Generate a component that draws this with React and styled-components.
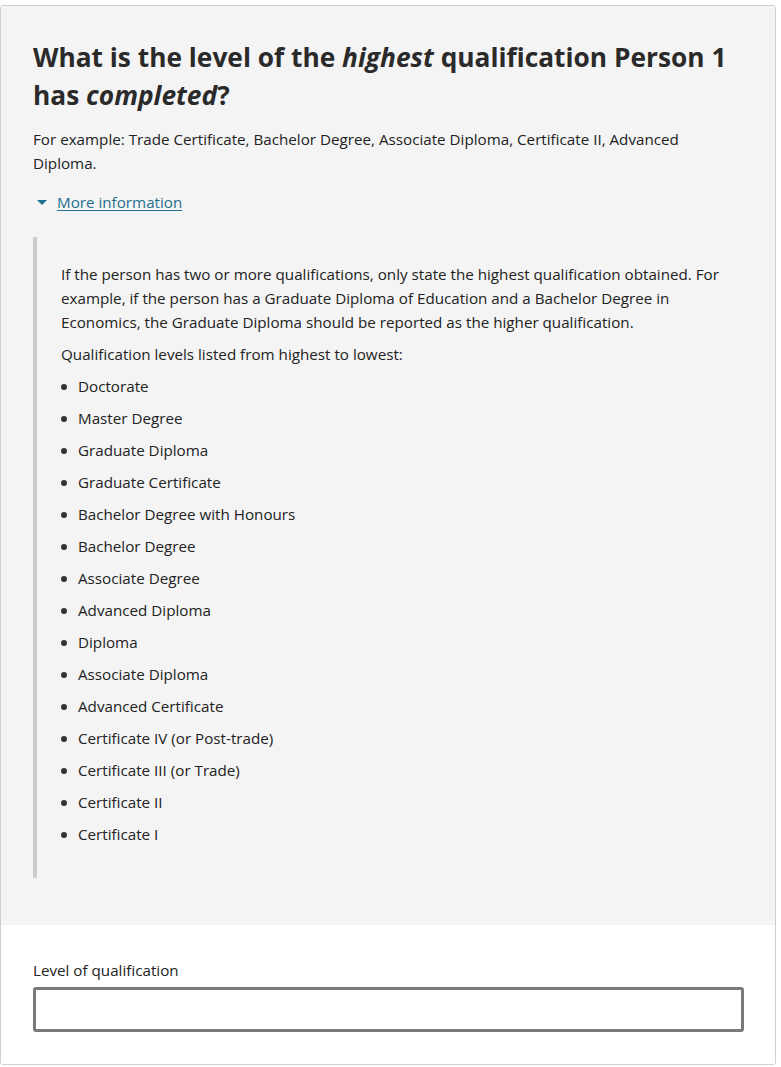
import React from 'react';
import styled, { createGlobalStyle } from 'styled-components';

const GlobalStyle = createGlobalStyle`
    html, body {
        margin: 0;
        padding: 0;
        background: #fff;
    }
    body {
        font-family: "Open Sans", "Noto Sans", sans-serif;
        color: #222;
    }
`;

const Page = styled.div`
    padding-top: 5px;
    width: 776px;
`;

const Card = styled.div`
    border: 1px solid #cfcfcf;
    border-radius: 3px;
    overflow: hidden;
`;

const QuestionArea = styled.div`
    background: #f4f4f4;
    padding: 32px 32px 47px 32px;
`;

const Title = styled.h1`
    margin: 0;
    font-size: 26.3px;
    line-height: 38px;
    font-weight: 700;
    color: #2a2a2a;

    em {
        font-style: italic;
    }
`;

const Text = styled.p`
    margin: ${(p) => p.$mt || 0}px 0 0 0;
    max-width: ${(p) => p.$max || 'none'};
    font-size: 15.2px;
    line-height: 24px;
    color: #222;
`;

const Toggle = styled.div`
    margin-top: 15px;
    display: flex;
    align-items: center;
    gap: 10px;
    padding-left: 3px;
    font-size: 15.2px;
    line-height: 24px;
`;

const Caret = styled.span`
    width: 0;
    height: 0;
    border-left: 5px solid transparent;
    border-right: 5px solid transparent;
    border-top: 5px solid #1f6f8f;
    margin-left: 1px;
`;

const MoreLink = styled.a`
    color: #1f6f8f;
    text-decoration: underline;
    text-underline-offset: 2px;
    cursor: pointer;
`;

const Details = styled.div`
    margin-top: 23px;
    border-left: 4px solid #cccccc;
    padding: 25px 0 24px 24px;
`;

const List = styled.ul`
    margin: 8px 0 0 0;
    padding: 0 0 0 17px;
    list-style: none;
`;

const Item = styled.li`
    position: relative;
    font-size: 15.2px;
    line-height: 24px;
    margin-bottom: 8px;

    &::before {
        content: "";
        position: absolute;
        left: -17px;
        top: 10px;
        width: 6px;
        height: 6px;
        border-radius: 50%;
        background: #333;
    }
`;

const AnswerArea = styled.div`
    background: #fff;
    padding: 33px 32px 32px 32px;
`;

const Label = styled.label`
    display: block;
    font-size: 15.2px;
    line-height: 24px;
    color: #222;
    margin-bottom: 5px;
`;

const Input = styled.input`
    box-sizing: border-box;
    display: block;
    width: 711px;
    height: 45px;
    border: 3px solid #7a7a7a;
    border-radius: 3px;
    background: #fff;
    font: inherit;
    font-size: 15px;
    padding: 0 10px;
    outline: none;
`;

const levels = [
    'Doctorate',
    'Master Degree',
    'Graduate Diploma',
    'Graduate Certificate',
    'Bachelor Degree with Honours',
    'Bachelor Degree',
    'Associate Degree',
    'Advanced Diploma',
    'Diploma',
    'Associate Diploma',
    'Advanced Certificate',
    'Certificate IV (or Post-trade)',
    'Certificate III (or Trade)',
    'Certificate II',
    'Certificate I',
];

const App = () => {
    return (
        <Page>
            <GlobalStyle />
            <Card>
                <QuestionArea>
                    <Title>
                        What is the level of the <em>highest</em> qualification Person 1 has <em>completed</em>?
                    </Title>
                    <Text $mt={13} $max="660px">
                        For example: Trade Certificate, Bachelor Degree, Associate Diploma, Certificate II, Advanced Diploma.
                    </Text>
                    <Toggle>
                        <Caret />
                        <MoreLink>More information</MoreLink>
                    </Toggle>
                    <Details>
                        <Text>
                            If the person has two or more qualifications, only state the highest qualification obtained. For example, if the person has a Graduate Diploma of Education and a Bachelor Degree in Economics, the Graduate Diploma should be reported as the higher qualification.
                        </Text>
                        <Text $mt={8}>Qualification levels listed from highest to lowest:</Text>
                        <List>
                            {levels.map((l) => (
                                <Item key={l}>{l}</Item>
                            ))}
                        </List>
                    </Details>
                </QuestionArea>
                <AnswerArea>
                    <Label htmlFor="qual">Level of qualification</Label>
                    <Input id="qual" type="text" />
                </AnswerArea>
            </Card>
        </Page>
    );
};

export default App;
